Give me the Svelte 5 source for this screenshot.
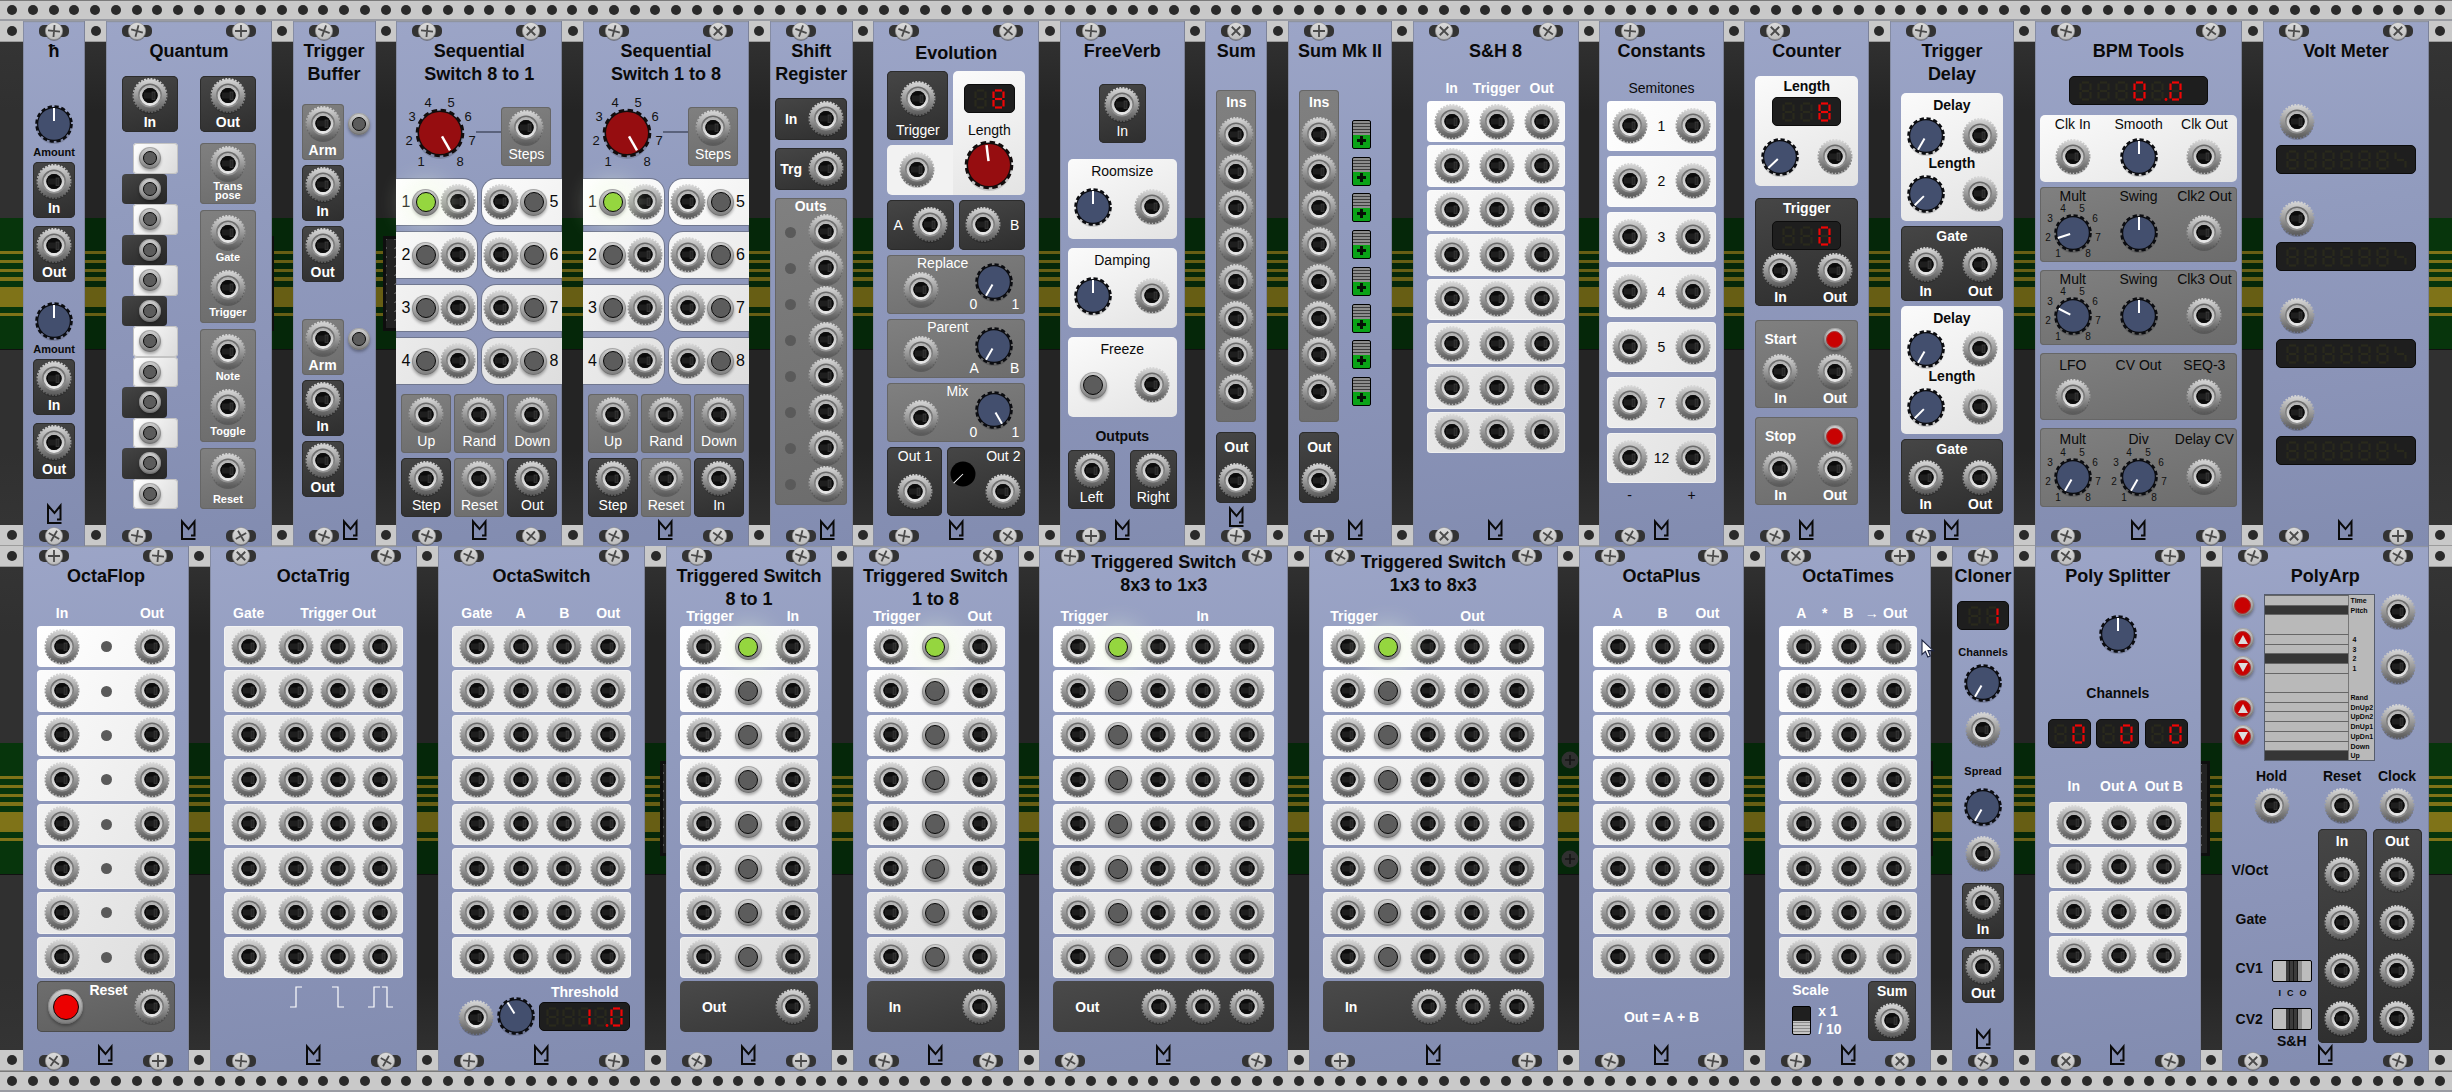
<script>
  const SEG = {
    a: 'M3 1.5H10', b: 'M11.5 2.5V9', c: 'M11.5 11V17.5', d: 'M3 18.5H10',
    e: 'M1.5 11V17.5', f: 'M1.5 2.5V9', g: 'M3 10H10'
  };
  const LIT = { 0: 'abcdef', 1: 'bc', 8: 'abcdefg' };
  const DIAL_BIG = [[-19, 28], [-31, 7], [-28, -17], [-12, -31], [11, -31], [28, -17], [32, 7], [20, 28]];
  const DIAL_SMALL = [[-15, 21], [-25, 5], [-23, -14], [-10, -24], [9, -24], [22, -14], [25, 5], [15, 21]];
  const KEYS = 'WDWDWDWWDWDW'.split('');
  const EIGHT = [0, 1, 2, 3, 4, 5, 6, 7];
  const ARP = [
    ['Time'], ['Pitch', 'on'], ['', 'blank'], ['4'], ['3'], ['2', 'on'], ['1'], ['', 'blank'],
    ['Rand'], ['DnUp2'], ['UpDn2'], ['DnUp1'], ['UpDn1'], ['Down'], ['Up', 'on']
  ];
</script>

{#snippet jack(name = 'Port')}
  <button class="jack" type="button" aria-label={name}><svg viewBox="0 0 36 36"><use href="#jack" /></svg></button>
{/snippet}

{#snippet knob(name, angle)}
  <label class="knob">
    <svg viewBox="-20 -20 40 40"><use href="#knob" /><path class="needle" d="M0 -16V-3" transform="rotate({angle})" /></svg>
    <input type="range" min="-150" max="150" value={angle} aria-label={name} />
  </label>
{/snippet}

{#snippet redKnob(name, angle)}
  <label class="knob red">
    <svg viewBox="-25 -25 50 50"><use href="#redknob" /><path class="needle" d="M0 -20V-4" transform="rotate({angle})" /></svg>
    <input type="range" min="-150" max="150" value={angle} aria-label={name} />
  </label>
{/snippet}

{#snippet bigDial(angle)}
  <label class="knob dial">
    <svg viewBox="-39 -38 100 82">
      <path class="wire" d="M36 -1H61" />
      <use href="#redknob" />
      <path class="needle" d="M0 -20V-4" transform="rotate({angle})" />
      {#each DIAL_BIG as [x, y], i}<text {x} y={y + 5}>{i + 1}</text>{/each}
    </svg>
    <input type="range" min="-150" max="150" value={angle} aria-label="Steps" />
  </label>
{/snippet}

{#snippet smallDial(name, angle)}
  <label class="knob mini">
    <svg viewBox="-30 -29 60 58">
      <use href="#knob" />
      <path class="needle" d="M0 -16V-3" transform="rotate({angle})" />
      {#each DIAL_SMALL as [x, y], i}<text {x} y={y + 3}>{i + 1}</text>{/each}
    </svg>
    <input type="range" min="-150" max="150" value={angle} aria-label={name} />
  </label>
{/snippet}

{#snippet pad(name, kind = '')}
  <button class="pad {kind}" type="button" aria-label={name}></button>
{/snippet}

{#snippet digit(ch)}
  {@const lit = LIT[ch.replace('.', '')] ?? ''}
  <svg class="digit" viewBox="0 0 13 20">
    {#each Object.entries(SEG) as [key, d]}
      {#if ch !== '?' || 'fgc'.includes(key)}<path class={lit.includes(key) ? 'on' : 'off'} {d} />{/if}
    {/each}
    {#if ch.includes('.')}<circle class="dot" cx="-3" cy="18.5" r="1.4" />{/if}
  </svg>
{/snippet}

{#snippet display(chars, kind = '')}
  <div class="display {kind}" role="img" aria-label="display">
    {#each chars as ch}{@render digit(ch)}{/each}
  </div>
{/snippet}

{#snippet cell(label, tone, bold = true)}
  <label class="plate cell {tone}" class:tall={!bold}>
    <button class="jack" type="button"><svg viewBox="0 0 36 36"><use href="#jack" /></svg></button>
    <span class:b={bold}>{label}</span>
  </label>
{/snippet}

{#snippet screw(angle)}
  <svg class="screw" viewBox="-15 -10 30 20">
    <rect x="-15" y="-6" width="30" height="12" rx="5" fill="#333" />
    <circle cy="1" r="9" fill="#555" opacity=".6" />
    <circle r="8.6" fill="url(#steel)" stroke="#8d8d8d" stroke-width=".6" />
    <path d="M-6 0H6M0 -6V6" stroke="#4a4a4a" stroke-width="1.8" transform="rotate({angle})" />
  </svg>
{/snippet}

{#snippet slot(kind = '')}
  <div class="slot {kind}">
    <i class="square"></i>
    {#if kind.includes('conn')}<i class="socket"></i>{/if}
    {#if kind === 'bolts'}
      <svg class="boltpair" viewBox="0 0 18 118">
        {#each [9, 108] as y}
          <circle cx="9" cy={y} r="8.5" fill="#303030" /><path d="M4 {y}H14M9 {y - 5}V{y + 5}" stroke="#151515" stroke-width="1.6" />
        {/each}
      </svg>
    {/if}
    <i class="square"></i>
  </div>
{/snippet}

{#snippet mod(cls, hp, title, screws, body)}
  <section class="mod hp{hp} {cls}" style:--hp={hp}>
    <div class="screws top">{@render screw(screws[0])}{#if hp > 7}{@render screw(screws[1])}{/if}</div>
    <h2>{#each title as line}<span>{line}</span>{/each}</h2>
    {@render body()}
    <svg class="logo" viewBox="0 0 15 20"><path d="M14.500 19H1V1.500L7.500 9L13.500 1.500V15.500H10" /></svg>
    <div class="screws bottom">{@render screw(screws[2])}{#if hp > 7}{@render screw(screws[3])}{/if}</div>
  </section>
{/snippet}

{#snippet hbar()}
  {#each [0, 1] as n}
    <div class="unit">
      {@render knob('Amount', 0)}
      <span class="s">Amount</span>
      <div class="pair">{@render cell('In', 'dark')}{@render cell('Out', 'dark')}</div>
    </div>
  {/each}
{/snippet}

{#snippet quantum()}
  <div class="cols first">{@render cell('In', 'dark')}{@render cell('Out', 'dark')}</div>
  <div class="cols">
    <div class="keys">
      {#each KEYS as k}<div class="key {k === 'W' ? 'white' : 'black'}">{@render pad('Note', 'small')}</div>{/each}
    </div>
    <div class="ports">
      <div class="plate grey one trans">{@render jack('Transpose')}<span class="s">Trans<br />pose</span></div>
      <div class="plate grey two">
        {@render jack('Gate')}<span class="s">Gate</span>{@render jack('Trigger')}<span class="s">Trigger</span>
      </div>
      <div class="plate grey two">
        {@render jack('Note')}<span class="s">Note</span>{@render jack('Toggle')}<span class="s">Toggle</span>
      </div>
      <div class="plate grey one">{@render jack('Reset')}<span class="s">Reset</span></div>
    </div>
  </div>
{/snippet}

{#snippet buffer()}
  {#each [0, 1] as n}
    <div class="arm">
      {@render cell('Arm', 'grey')}{@render pad('Arm', 'small')}
      {@render cell('In', 'dark')}<span></span>
      {@render cell('Out', 'dark')}
    </div>
  {/each}
{/snippet}

{#snippet sequencer(last)}
  <div class="steps">{@render bigDial(150)}{@render cell('Steps', 'grey', false)}</div>
  <div class="lanes">
    {#each [1, 2, 3, 4] as n}
      <div class="lane">
        <div class="half" style:--i={n * 2 - 2}><span>{n}</span>{@render pad('Step ' + n, n === 1 ? 'mid lit' : 'mid')}{@render jack('Step ' + n)}</div>
        <div class="half mirrored" style:--i={n * 2 - 1}><span>{n + 4}</span>{@render pad('Step ' + (n + 4), 'mid')}{@render jack('Step ' + (n + 4))}</div>
      </div>
    {/each}
  </div>
  <div class="six">
    {@render cell('Up', 'grey', false)}{@render cell('Rand', 'grey', false)}{@render cell('Down', 'grey', false)}
    {@render cell('Step', 'dark', false)}{@render cell('Reset', 'grey', false)}{@render cell(last, 'dark', false)}
  </div>
{/snippet}
{#snippet seqOut()}{@render sequencer('Out')}{/snippet}
{#snippet seqIn()}{@render sequencer('In')}{/snippet}

{#snippet shift()}
  <div class="regs">
    <div class="plate dark line"><span class="b">In</span>{@render jack('In')}</div>
    <div class="plate dark line"><span class="b">Trg</span>{@render jack('Trigger')}</div>
    <div class="plate grey outs">
      <span class="b">Outs</span>
      {#each EIGHT as n}<div class="tap"><i class="lamp"></i>{@render jack('Out ' + (n + 1))}</div>{/each}
    </div>
  </div>
{/snippet}

{#snippet evoRow(name, lo, hi, angle)}
  <div class="plate grey gene">
    <div class="left"><span>{name}</span>{@render jack(name)}</div>
    <div class="right">{@render knob(name, angle)}<div class="ends"><span>{lo}</span><span>{hi}</span></div></div>
  </div>
{/snippet}

{#snippet evolution()}
  <div class="evo">
    <div class="ell">
      <div class="plate dark trig">{@render jack('Trigger')}<span>Trigger</span></div>
      <div class="plate light len">{@render display([' ', '8'])}<span>Length</span>{@render redKnob('Length', -7)}</div>
      <div class="light foot">{@render jack('Length')}</div>
    </div>
    <div class="ab">
      <div class="plate dark"><span>A</span>{@render jack('A')}</div>
      <div class="plate dark">{@render jack('B')}<span>B</span></div>
    </div>
    {@render evoRow('Replace', '0', '1', -150)}
    {@render evoRow('Parent', 'A', 'B', -150)}
    {@render evoRow('Mix', '0', '1', 150)}
    <div class="evouts">
      <div class="plate dark out1 stack"><span>Out 1</span>{@render jack('Out 1')}</div>
      <div class="plate dark out2">
        <label class="knob trim">
          <svg viewBox="-13 -13 26 26"><circle r="12.500" fill="#000" /><path class="needle thin" d="M0 0V-13" transform="rotate(-134)" /></svg>
          <input type="range" aria-label="Out 2 trim" />
        </label>
        <div class="stack"><span>Out 2</span>{@render jack('Out 2')}</div>
      </div>
    </div>
  </div>
{/snippet}

{#snippet freeverb()}
  <div class="verb">
    <div class="solo">{@render cell('In', 'dark', false)}</div>
    <div class="plate light box"><span>Roomsize</span><div class="duo">{@render knob('Roomsize', 0)}{@render jack('Roomsize')}</div></div>
    <div class="plate light box"><span>Damping</span><div class="duo">{@render knob('Damping', 0)}{@render jack('Damping')}</div></div>
    <div class="plate light box"><span>Freeze</span><div class="duo">{@render pad('Freeze', 'mid')}{@render jack('Freeze')}</div></div>
    <span class="b cap">Outputs</span>
    <div class="cols">{@render cell('Left', 'dark', false)}{@render cell('Right', 'dark', false)}</div>
  </div>
{/snippet}

{#snippet sumStrip()}
  <div class="strip">
    <div class="plate grey ins"><span class="b">Ins</span><div class="pile">{#each EIGHT as n}{@render jack('In ' + (n + 1))}{/each}</div></div>
    <div class="plate dark total"><span class="b">Out</span>{@render jack('Out')}</div>
  </div>
{/snippet}

{#snippet sum()}<div class="sums">{@render sumStrip()}</div>{/snippet}
{#snippet sum2()}
  <div class="sums wide">
    {@render sumStrip()}
    <div class="flips">{#each EIGHT as n}<input type="checkbox" class="plus" checked aria-label="Polarity {n + 1}" />{/each}</div>
  </div>
{/snippet}

{#snippet heads(names, kind = '')}
  <div class="heads {kind}">{#each names as n}<span class="b">{n}</span>{/each}</div>
{/snippet}

{#snippet bank(cols, kind = '', count = 8)}
  <div class="bank {kind}">
    {#each EIGHT.slice(0, count) as r}
      <div class="rung" style:--i={r}>
        {#each cols as c}
          {#if c === 'j'}{@render jack('Row ' + (r + 1))}
          {:else if c === 'o'}<i class="lamp"></i>
          {:else}{@render pad('Row ' + (r + 1), r === 0 ? 'mid lit' : 'mid')}{/if}
        {/each}
      </div>
    {/each}
  </div>
{/snippet}

{#snippet sh8()}
  {@render heads(['In', 'Trigger', 'Out'])}
  {@render bank(['j', 'j', 'j'])}
{/snippet}

{#snippet constants()}
  <span class="semi">Semitones</span>
  <div class="consts">
    {#each [1, 2, 3, 4, 5, 7, 12] as n, i}
      <div class="rung" style:--i={i}>{@render jack('minus ' + n)}<span>{n}</span>{@render jack('plus ' + n)}</div>
    {/each}
  </div>
  <div class="signs"><span>-</span><span>+</span></div>
{/snippet}

{#snippet io(name)}
  <div class="duo">{@render jack(name + ' in')}{@render jack(name + ' out')}</div>
  <div class="duo tags"><span class="b">In</span><span class="b">Out</span></div>
{/snippet}

{#snippet counter()}
  <div class="count">
    <div class="plate light c1"><span class="b">Length</span>{@render display([' ', ' ', '8'])}<div class="duo">{@render knob('Length', -133)}{@render jack('Length')}</div></div>
    <div class="plate dark c2"><span class="b">Trigger</span>{@render display([' ', ' ', '0'])}{@render io('Trigger')}</div>
    <div class="plate grey c3"><div class="duo head"><span class="b">Start</span>{@render pad('Start', 'small redled')}</div>{@render io('Start')}</div>
    <div class="plate grey c3 c4"><div class="duo head"><span class="b">Stop</span>{@render pad('Stop', 'small redled')}</div>{@render io('Stop')}</div>
  </div>
{/snippet}

{#snippet delay()}
  <div class="delays">
    {#each [0, 1] as n}
      <div class="plate light d1">
        <span class="b">Delay</span><div class="duo">{@render knob('Delay', -150)}{@render jack('Delay')}</div>
        <span class="b">Length</span><div class="duo">{@render knob('Length', -135)}{@render jack('Length')}</div>
      </div>
      <div class="plate dark d2"><span class="b">Gate</span>{@render io('Gate')}</div>
    {/each}
  </div>
{/snippet}

{#snippet bpm()}
  <div class="tools">
    {@render display([' ', ' ', ' ', '0', ' ', '.0'])}
    <div class="plate light tri t1">
      <span>Clk In</span><span>Smooth</span><span>Clk Out</span>
      {@render jack('Clock in')}{@render knob('Smooth', 0)}{@render jack('Clock out')}
    </div>
    <div class="plate grey tri t2">
      <span>Mult</span><span>Swing</span><span>Clk2 Out</span>
      {@render smallDial('Mult', -108)}{@render knob('Swing', 0)}{@render jack('Clock 2 out')}
    </div>
    <div class="plate grey tri t3">
      <span>Mult</span><span>Swing</span><span>Clk3 Out</span>
      {@render smallDial('Mult', -63)}{@render knob('Swing', 0)}{@render jack('Clock 3 out')}
    </div>
    <div class="plate grey tri t4">
      <span>LFO</span><span>CV Out</span><span>SEQ-3</span>
      {@render jack('LFO')}<i></i>{@render jack('SEQ-3')}
    </div>
    <div class="plate grey tri t5">
      <span>Mult</span><span>Div</span><span>Delay CV</span>
      {@render smallDial('Mult', -150)}{@render smallDial('Div', -150)}{@render jack('Delay CV')}
    </div>
  </div>
{/snippet}

{#snippet volts()}
  <div class="meters">
    {#each [1, 2, 3, 4] as n}<div class="meter">{@render jack('Volt ' + n)}{@render display([' ', ' ', ' ', ' ', ' ', ' ', '?'])}</div>{/each}
  </div>
{/snippet}

{#snippet octaflop()}
  {@render heads(['In', '', 'Out'])}
  {@render bank(['j', 'o', 'j'])}
  <div class="base reset">{@render pad('Reset', 'large')}<span class="b">Reset</span>{@render jack('Reset')}</div>
{/snippet}

{#snippet octatrig()}
  {@render heads(['Gate', '', 'Trigger Out', ''], 'lead')}
  {@render bank(['j', 'j', 'j', 'j'], 'lead flat')}
  <div class="edges">
    <svg viewBox="0 0 36 22"><path d="M12 21H18V1H24" /></svg>
    <svg viewBox="0 0 36 22"><path d="M12 1H18V21H24" /></svg>
    <svg viewBox="0 0 36 22"><path d="M6 21H12V1H18M20 1H25V21H31" /></svg>
  </div>
{/snippet}

{#snippet octaswitch()}
  {@render heads(['Gate', 'A', 'B', 'Out'])}
  {@render bank(['j', 'j', 'j', 'j'], 'flat')}
  <div class="thresh">
    {@render jack('Threshold')}{@render knob('Threshold', -32)}
    <div class="stack"><span class="b">Threshold</span>{@render display([' ', ' ', '1', ' ', '.0'], 'tight')}</div>
  </div>
{/snippet}

{#snippet ts(dir)}
  {@render heads(['Trigger', '', dir === 'Out' ? 'In' : 'Out'], 'low')}
  {@render bank(['j', 'b', 'j'], 'trio')}
  <div class="base"><span class="b">{dir}</span>{@render jack(dir)}</div>
{/snippet}
{#snippet ts81()}{@render ts('Out')}{/snippet}
{#snippet ts18()}{@render ts('In')}{/snippet}
{#snippet ts3(dir)}
  {@render heads(['Trigger', '', '', dir === 'Out' ? 'In' : 'Out', ''], 'low high')}
  {@render bank(['j', 'b', 'j', 'j', 'j'], 'five')}
  <div class="base five"><span class="b">{dir}</span>{@render jack(dir)}{@render jack(dir)}{@render jack(dir)}</div>
{/snippet}
{#snippet ts83()}{@render ts3('Out')}{/snippet}
{#snippet ts38()}{@render ts3('In')}{/snippet}

{#snippet octaplus()}
  {@render heads(['A', 'B', 'Out'])}
  {@render bank(['j', 'j', 'j'])}
  <span class="b formula">Out = A + B</span>
{/snippet}

{#snippet octatimes()}
  {@render heads(['A', '*', 'B', '→', 'Out'], 'ops')}
  {@render bank(['j', 'j', 'j'])}
  <div class="scale">
    <div class="stack">
      <span class="b">Scale</span>
      <div class="pick"><input type="checkbox" class="rocker" aria-label="Scale" /><span class="b">x 1<br />/ 10</span></div>
    </div>
    <div class="plate dark sumout"><span class="b">Sum</span>{@render jack('Sum')}</div>
  </div>
{/snippet}

{#snippet cloner()}
  <div class="clone">
    {@render display([' ', '1'], 'two')}
    <span class="s c">Channels</span>{@render knob('Channels', -150)}{@render jack('Channels')}
    <span class="s sp">Spread</span>{@render knob('Spread', -150)}{@render jack('Spread')}
    <div class="pair">{@render cell('In', 'dark')}{@render cell('Out', 'dark')}</div>
  </div>
{/snippet}

{#snippet splitter()}
  <div class="split">
    {@render knob('Channels', 0)}
    <span class="b">Channels</span>
    <div class="counts">{@render display([' ', '0'], 'two')}{@render display([' ', '0'], 'two')}{@render display([' ', '0'], 'two')}</div>
  </div>
  {@render heads(['In', 'Out A', 'Out B'], 'under')}
  {@render bank(['j', 'j', 'j'], 'flat four', 4)}
{/snippet}

{#snippet polyarp()}
  <div class="arp">
    <div class="arptop">
      <div class="btns">
        {@render pad('Select', 'small redled')}
        {@render pad('Up', 'small redled up g12')}{@render pad('Down', 'small redled down g6')}
        {@render pad('Up', 'small redled up g19')}{@render pad('Down', 'small redled down g6')}
      </div>
      <ul class="screen">
        {#each ARP as [name, kind]}<li class={kind}><i></i><span class:num={name.length === 1}>{name}</span></li>{/each}
      </ul>
      <div class="jcol">{@render jack('Time')}{@render jack('Distance')}{@render jack('Pattern')}</div>
    </div>
    <div class="arpgrid mid">
      <div class="stack"><span class="b">Hold</span>{@render jack('Hold')}</div>
      <div class="stack"><span class="b">Reset</span>{@render jack('Reset')}</div>
      <div class="stack"><span class="b">Clock</span>{@render jack('Clock')}</div>
    </div>
    <div class="arpgrid">
      <div class="legend">
        <span class="b">V/Oct</span>
        <span class="b">Gate</span>
        <label class="cv start"><span class="b">CV1</span><input type="range" min="0" max="2" value="1" /></label>
        <div class="ico"><span>I</span><span>C</span><span>O</span></div>
        <label class="cv"><span class="b">CV2</span><input type="range" min="0" max="2" value="1" /></label>
        <span class="b sh">S&amp;H</span>
      </div>
      {#each ['In', 'Out'] as t}
        <div class="plate dark tower"><span class="b">{t}</span>{@render jack('V/Oct ' + t)}{@render jack('Gate ' + t)}{@render jack('CV1 ' + t)}{@render jack('CV2 ' + t)}</div>
      {/each}
    </div>
  </div>
{/snippet}

{#snippet rail()}
  <div class="rail">{#each Array(118) as _}<i></i>{/each}</div>
{/snippet}

<svg class="defs" width="0" height="0" aria-hidden="true">
  <defs>
    <linearGradient id="knurl" x1="0" y1="0" x2="0" y2="1"><stop offset="0" stop-color="#d6d6d6" /><stop offset=".5" stop-color="#9a9a9a" /><stop offset="1" stop-color="#5a5a5a" /></linearGradient>
    <linearGradient id="dish" x1="0" y1="0" x2="0" y2="1"><stop offset="0" stop-color="#686868" /><stop offset="1" stop-color="#969696" /></linearGradient>
    <linearGradient id="lip" x1="0" y1="0" x2="0" y2="1"><stop offset="0" stop-color="#b4b4b4" /><stop offset="1" stop-color="#e6e6e6" /></linearGradient>
    <linearGradient id="steel" x1="0" y1="0" x2="0" y2="1"><stop offset="0" stop-color="#dcdcdc" /><stop offset="1" stop-color="#bdbdbd" /></linearGradient>
    <symbol id="jack" viewBox="0 0 36 36">
      <circle cx="18" cy="19.500" r="16.500" fill="#000" opacity=".2" />
      <circle cx="18" cy="17.500" r="16.300" fill="url(#knurl)" />
      <circle cx="18" cy="17.500" r="16.600" fill="none" stroke="url(#knurl)" stroke-width="1.800" stroke-dasharray="1.900 1.360" />
      <circle cx="18" cy="17.500" r="12" fill="url(#dish)" />
      <circle cx="18" cy="17.500" r="9" fill="#0e0e0e" stroke="url(#lip)" stroke-width="2.800" />
      <circle cx="18" cy="17.500" r="7.600" fill="#0b0b0b" />
      <rect x="12" y="14.500" width="7.500" height="6" fill="#1e1e1e" />
      <rect x="20" y="14" width="3" height="7.500" fill="#242424" stroke="#3c3c3c" stroke-width=".8" />
    </symbol>
    <g id="knob">
      <circle cy="2" r="18" fill="#000" opacity=".15" />
      <circle r="17" fill="#0b0c10" />
      <circle r="17.400" fill="none" stroke="#0b0c10" stroke-width="2.800" stroke-dasharray="4.200 2.630" />
      <circle r="15.800" fill="#434f6e" />
    </g>
    <g id="redknob">
      <circle cy="3" r="23" fill="#000" opacity=".15" />
      <circle r="22.400" fill="#120c0c" />
      <circle r="22.800" fill="none" stroke="#120c0c" stroke-width="3" stroke-dasharray="5.400 3.550" />
      <circle r="21" fill="#960d10" />
    </g>
  </defs>
</svg>

<main>
  {@render rail()}
  <div class="row">
    {@render slot('edge')}
    {@render mod('hbar', 3, ['ħ'], [5, 0, 30], hbar)}{@render slot()}
    {@render mod('quantum', 8, ['Quantum'], [15, 0, 10, 60], quantum)}{@render slot('conn left thin')}
    {@render mod('buffer', 4, ['Trigger', 'Buffer'], [20, 0, 20], buffer)}{@render slot('conn wide')}
    {@render mod('seq', 8, ['Sequential', 'Switch 8 to 1'], [5, 45, 20, 40], seqOut)}{@render slot()}
    {@render mod('seq', 8, ['Sequential', 'Switch 1 to 8'], [15, 45, 25, 35], seqIn)}{@render slot()}
    {@render mod('shift', 4, ['Shift', 'Register'], [20, 0, 15], shift)}{@render slot()}
    {@render mod('evolution', 8, ['Evolution'], [20, 40, 10, 35], evolution)}{@render slot()}
    {@render mod('freeverb', 6, ['FreeVerb'], [5, 0, 0], freeverb)}{@render slot()}
    {@render mod('sum', 3, ['Sum'], [45, 0, 8], sum)}{@render slot()}
    {@render mod('sum2', 5, ['Sum Mk II'], [0, 0, 0], sum2)}{@render slot()}
    {@render mod('sh8', 8, ['S&H 8'], [45, 35, 45, 35], sh8)}{@render slot()}
    {@render mod('constants', 6, ['Constants'], [5, 0, 30], constants)}{@render slot()}
    {@render mod('counter', 6, ['Counter'], [45, 0, 25], counter)}{@render slot()}
    {@render mod('delay', 6, ['Trigger', 'Delay'], [10, 0, 20], delay)}{@render slot()}
    {@render mod('bpm', 10, ['BPM Tools'], [15, 35, 20, 15], bpm)}{@render slot()}
    {@render mod('volts', 8, ['Volt Meter'], [5, 45, 45, 0], volts)}
    {@render slot('edge')}
  </div>
  <div class="row">
    {@render slot('edge')}
    {@render mod('octa', 8, ['OctaFlop'], [0, 5, 35, 0], octaflop)}{@render slot()}
    {@render mod('octa', 10, ['OctaTrig'], [45, 20, 5, 30], octatrig)}{@render slot()}
    {@render mod('octa', 10, ['OctaSwitch'], [25, 20, 5, 10], octaswitch)}{@render slot('conn narrow')}
    {@render mod('octa', 8, ['Triggered Switch', '8 to 1'], [10, 20, 30, 0], ts81)}{@render slot()}
    {@render mod('octa', 8, ['Triggered Switch', '1 to 8'], [25, 35, 15, 20], ts18)}{@render slot()}
    {@render mod('octa raised', 12, ['Triggered Switch', '8x3 to 1x3'], [5, 20, 30, 20], ts83)}{@render slot()}
    {@render mod('octa raised', 12, ['Triggered Switch', '1x3 to 8x3'], [30, 15, 0, 5], ts38)}{@render slot('bolts')}
    {@render mod('octa', 8, ['OctaPlus'], [5, 5, 20, 10], octaplus)}{@render slot()}
    {@render mod('octa', 8, ['OctaTimes'], [40, 0, 10, 45], octatimes)}{@render slot('conn left thin')}
    {@render mod('cloner', 3, ['Cloner'], [15, 0, 30], cloner)}{@render slot()}
    {@render mod('octa', 8, ['Poly Splitter'], [35, 5, 45, 20], splitter)}{@render slot('conn left')}
    {@render mod('polyarp', 10, ['PolyArp'], [20, 30, 45, 20], polyarp)}
    {@render slot('edge')}
  </div>
  {@render rail()}
  <svg class="cursor" viewBox="0 0 13 19"><path d="M1 1V15.500L4.400 12.400L6.800 18L9.300 17L7 11.600H12.200Z" fill="#fff" stroke="#1c2340" stroke-width="1.100" /></svg>
</main>

<style>
  :global(body) { margin: 0; background: #242424; }
  main {
    position: relative; overflow: hidden;
    font: 14px/16px "Liberation Sans", Arial, sans-serif; color: #0a0a0a;
  }
  main *, main *::before, main *::after { box-sizing: border-box; }
  svg { display: block; overflow: visible; }
  span { white-space: nowrap; }
  .b { font-weight: 700; }
  .s { font-weight: 700; font-size: 11px; }
  .defs { height: 0; }

  .rail {
    display: flex; justify-content: space-between; align-items: center; height: 21px; padding: 0 7px;
    background: #c9c9c9; border-top: 1px solid #7b7b7b; border-bottom: 2px solid #9a9ca3;
  }
  .rail i { width: 10px; height: 10px; border-radius: 50%; background: #2a2a2a; }

  .row { display: flex; min-height: 525px; }
  .slot {
    --dark: #242424; --pcb: #052709; --gold: #675e14; --lit: #303030;
    position: relative; flex: 1 1 0; min-width: 0; display: flex; flex-direction: column; justify-content: space-between;
    background: linear-gradient(var(--lit) 21px, var(--dark) 90px, var(--dark) 197px,
      var(--pcb) 197px, var(--pcb) 230px, var(--gold) 230px, var(--gold) 233px, var(--pcb) 233px, var(--pcb) 239px,
      var(--gold) 239px, var(--gold) 242px, var(--pcb) 242px, var(--pcb) 248px, var(--gold) 248px, var(--gold) 251px,
      var(--pcb) 251px, var(--pcb) 256px, var(--gold) 256px, var(--gold) 260px, var(--pcb) 260px, var(--pcb) 266px,
      var(--gold) 266px, var(--gold) 286px, var(--pcb) 286px, var(--pcb) 292px, var(--gold) 292px, var(--gold) 295px,
      var(--pcb) 295px, var(--pcb) 328px, #111 328px, #111 329px, var(--dark) 329px, var(--dark) 430px, var(--lit) 504px);
  }
  .slot.edge { flex: 0 0 23px; --dark: #303030; --pcb: #07350c; --gold: #7f7318; --lit: #343434; }
  .square { display: flex; align-items: center; justify-content: center; height: 21px; background: #c9c9c9; border-bottom: 1px solid #9c9c9c; }
  .square::after { content: ""; width: 10px; height: 10px; border-radius: 50%; background: #2a2a2a; }
  .socket {
    position: absolute; right: 0; top: 215px; width: 13px; height: 95px;
    background: radial-gradient(circle, #555 1px, transparent 1px) 5px 5px / 9px 9px #222;
    border: 3px solid #0e0e0e; border-right: 0;
  }
  .narrow .socket { width: 6px; }
  .left .socket { left: 0; right: auto; width: 9px; border-right: 3px solid #0e0e0e; border-left: 0; }
  .thin .socket { width: 2px; border: 0; background: #0e0e0e; }
  .boltpair { position: absolute; right: 0; top: 205px; width: 18px; height: 118px; }

  .mod {
    position: relative; flex: var(--hp) 1 0; min-width: 0; display: flex; flex-direction: column; align-items: stretch;
    padding: 19px 0 6px;
    background: linear-gradient(172deg, #9ca5c7 0%, #919bbe 35%, #8b94b8 65%, #828cb0 100%);
    box-shadow: inset 1px 0 #858ca3, inset -1px 0 #7c8299, inset 0 1px #8f949f, inset 0 2px #98a1c0;
  }
  .raised { padding-top: 5px; }
  .evolution { padding-top: 21px; }
  h2 { margin: 0; display: flex; flex-direction: column; align-items: center; font-size: 18px; line-height: 23px; font-weight: 700; z-index: 1; }
  .screws { position: absolute; left: 16px; right: 16px; display: flex; justify-content: space-between; }
  .screws.top { top: 0; }
  .screws.bottom { bottom: 0; }
  .screw { width: 30px; height: 20px; flex: none; }
  .logo { width: 15px; height: 20px; margin: auto auto 0; flex: none; z-index: 1; fill: none; stroke: #0a0a0a; stroke-width: 2; }
  .hp3 { padding-bottom: 22px; }
  .hp4 .logo { margin-right: 18px; }
  .hp5 .logo { margin-right: 29px; }

  button, input { margin: 0; padding: 0; border: 0; background: none; font: inherit; }
  .jack { display: block; width: 36px; height: 36px; flex: none; }
  .jack svg { width: 36px; height: 36px; }
  .knob { position: relative; display: block; width: 40px; height: 40px; flex: none; }
  .knob svg { width: 100%; height: 100%; }
  .knob input { position: absolute; inset: 0; width: 100%; height: 100%; opacity: 0; }
  .knob.red { width: 50px; height: 50px; }
  .knob.trim { width: 26px; height: 26px; }
  .knob.dial { width: 100px; height: 82px; }
  .knob.mini { width: 60px; height: 58px; }
  .knob text { text-anchor: middle; fill: #111; }
  .dial text { font-size: 13px; }
  .mini text { font-size: 10px; }
  .needle { fill: none; stroke: #fff; stroke-width: 2; }
  .needle.thin { stroke-width: 1; }
  .red .needle, .dial .needle { stroke-width: 2.500; }
  .wire { stroke: #3b4157; stroke-width: 1.300; }

  .pad {
    position: relative; flex: none; border-radius: 50%; width: 22px; height: 22px;
    display: flex; align-items: center; justify-content: center;
    background: linear-gradient(#d2d2d2, #7d7d7d); box-shadow: 0 0 0 1px rgba(90, 90, 90, .35) inset, 0 2px 3px rgba(0, 0, 0, .3);
  }
  .pad::after { content: ""; width: 14px; height: 14px; border-radius: 50%; background: #5c5c5c; border: 1px solid #080808; }
  .pad.mid { width: 27px; height: 27px; }
  .pad.mid::after { width: 20px; height: 20px; }
  .pad.large { width: 35px; height: 35px; }
  .pad.large::after { width: 26px; height: 26px; background: #ec0000; }
  .pad.redled::after { width: 17px; height: 17px; background: #c80202; border-color: #a33; }
  .pad.lit::after { background: #95d63f; }
  .pad.lit { z-index: 1; box-shadow: 0 0 26px 6px rgba(242, 255, 225, .6), 0 2px 3px rgba(0, 0, 0, .25), 0 0 0 1px rgba(90, 90, 90, .35) inset; }
  .up::before, .down::before { content: ""; position: absolute; z-index: 1; border: 5px solid transparent; border-width: 0 5px 9px; border-bottom-color: #dcdcdc; }
  .down::before { border-width: 9px 5px 0; border-top-color: #dcdcdc; }
  .lamp { width: 11px; height: 11px; border-radius: 50%; background: #5a5a5a; flex: none; }

  .display {
    display: flex; align-items: center; gap: 5px; height: 29px; padding: 0 9px; flex: none;
    background: #1e1e1e; border: 1px solid #0c0c0c; border-radius: 5px;
  }
  .digit { width: 13px; height: 20px; flex: none; }
  .digit path { stroke-width: 2.200; fill: none; }
  .digit .off { stroke: #29291c; }
  .digit .on { stroke: #f00505; }
  .dot { fill: #e00; }
  .tight { gap: 3px; padding: 0 6px; }
  .two { gap: 5px; padding: 0 5px; justify-content: center; }

  .plate { border-radius: 5px; }
  .dark { background: linear-gradient(165deg, #464646, #2e2e2e); color: #fff; box-shadow: inset 0 0 0 1px #2c2c2c; }
  .grey { background: linear-gradient(165deg, #808080, #6c6c6c); color: #fff; box-shadow: inset 0 0 0 1px #666; border-radius: 4px; }
  .light { background: linear-gradient(155deg, #fbfbfb, #e3e3e3); }
  .cell { display: flex; flex-direction: column; align-items: center; width: 42px; padding: 2px 0; }
  .cell.tall { width: 50px; padding: 3px 0 4px; }
  .cols { display: flex; justify-content: space-between; }
  .stack { display: flex; flex-direction: column; align-items: center; }
  .duo { display: grid; grid-template-columns: 50px 46px; justify-content: space-between; align-self: stretch; align-items: center; justify-items: center; }

  .unit { display: flex; flex-direction: column; align-items: center; margin-top: 41px; }
  .unit + .unit { margin-top: 19px; }
  .pair { display: flex; flex-direction: column; align-items: center; gap: 8px; margin-top: 2px; }

  .quantum .cols { padding: 0 16px; margin-top: 11px; }
  .quantum .cols.first { margin-top: 13px; }
  .quantum .cell { width: 56px; }
  .keys { width: 56px; height: 366px; display: flex; flex-direction: column; }
  .key { flex: 1; width: 45px; display: flex; align-items: center; border-radius: 4px; }
  .key.white { align-self: flex-end; padding-left: 6px; background: linear-gradient(120deg, #fff, #dadada); box-shadow: inset 0 0 0 1px #c3c3c3; }
  .key.black { padding-left: 17px; background: linear-gradient(150deg, #454545, #262626); }
  .ports { width: 56px; display: flex; flex-direction: column; gap: 6px; }
  .one, .two.plate { display: flex; flex-direction: column; align-items: center; padding: 5px 0 4px; gap: 0; }
  .two.plate { justify-content: flex-start; }
  .one { height: 61px; justify-content: space-between; }
  .trans { padding: 3px 0 4px; justify-content: flex-start; text-align: center; }
  .ports .s { line-height: 12px; }
  .ports .trans .s { line-height: 9px; }
  .two.plate { height: 113px; }
  .two.plate .s + :global(.jack) { margin-top: 7px; }

  .arm { display: grid; grid-template-columns: 42px 22px; gap: 5px 4px; margin: 18px 0 0 9px; }
  .arm + .arm { margin-top: 37px; }
  .arm .pad { margin-top: 9px; }

  .steps { display: flex; align-items: center; margin: 9px 0 1px 5px; }
  .lanes { display: flex; flex-direction: column; gap: 5px; }
  .lane { display: flex; gap: 3px; }
  .half {
    flex: 1; display: flex; align-items: center; gap: 1px; height: 48px; padding: 0 1px 0 4px;
    background: linear-gradient(120deg, hsl(0 0% calc(100% - var(--i) * 1.3%)), hsl(0 0% calc(96% - var(--i) * 1.3%)));
    border: 1px solid #70778f; border-width: 1px 1px 1px 0; border-radius: 0 15px 15px 0;
  }
  .half > span { width: 11px; font-size: 16px; text-align: center; }
  .half.mirrored { flex-direction: row-reverse; padding: 0 4px 0 1px; border-width: 1px 0 1px 1px; border-radius: 15px 0 0 15px; }
  .six { display: grid; grid-template-columns: repeat(3, 50px); justify-content: center; gap: 5px 3px; margin-top: 9px; }

  .regs { display: flex; flex-direction: column; gap: 8px; padding: 12px 6px 0 5px; }
  .line { display: flex; align-items: center; height: 42px; padding-right: 3px; }
  .line span { flex: 1; text-align: center; }
  .outs { display: flex; flex-direction: column; align-items: stretch; padding-bottom: 3px; }
  .outs > span { text-align: center; }
  .tap { display: flex; align-items: center; justify-content: space-between; padding: 0 3px 0 10px; }

  .evo { display: flex; flex-direction: column; gap: 5px; margin-top: 6px; padding: 0 14px; }
  .ell { display: grid; grid-template-columns: 61px 5px 1fr; grid-template-rows: 69px 5px 50px; }
  .trig { display: flex; flex-direction: column; align-items: center; padding-top: 10px; gap: 5px; }
  .len { grid-column: 3; grid-row: 1 / 4; display: flex; flex-direction: column; align-items: center; padding-top: 13px; gap: 9px; border-bottom-left-radius: 0; }
  .len .knob { margin-top: -7px; }
  .foot { grid-column: 1 / 3; grid-row: 3; display: flex; align-items: center; padding-left: 12px; border-radius: 5px 0 0 5px; background: #f2f2f2; }
  .ab { display: grid; grid-template-columns: 1fr 1fr; gap: 5px; }
  .ab .plate { display: flex; align-items: center; justify-content: space-between; height: 50px; padding: 0 6px; }
  .gene { display: flex; height: 59px; }
  .gene .left { width: 82px; display: flex; flex-direction: column; align-items: flex-end; padding-right: 1px; gap: 1px; }
  .gene .left .jack { align-self: flex-start; margin-left: 16px; }
  .gene .right { width: 50px; display: flex; flex-direction: column; align-items: center; padding-top: 7px; }
  .ends { display: flex; justify-content: space-between; align-self: stretch; margin-top: -6px; }
  .evouts { display: grid; grid-template-columns: 55px 78px; justify-content: space-between; }
  .out1, .out2 { height: 69px; padding-top: 1px; }
  .out1.stack, .out2 .stack { gap: 10px; }
  .out2 { display: flex; padding: 1px 4px 0 3px; justify-content: space-between; }
  .out2 .trim { margin-top: 13px; }

  .verb { display: flex; flex-direction: column; padding: 0 8px; margin-top: 21px; }
  .verb .cell { width: 47px; }
  .solo { display: flex; justify-content: center; margin-bottom: 7px; }
  .box { display: flex; flex-direction: column; align-items: center; height: 80px; margin-top: 9px; padding-top: 4px; gap: 8px; }
  .box .duo { height: 40px; grid-template-columns: 50px 50px; }
  .cap { text-align: center; margin: 11px 0 6px; }

  .sums { display: flex; margin-top: 27px; justify-content: center; }
  .sums.wide { justify-content: flex-start; gap: 13px; padding-left: 11px; }
  .strip { display: flex; flex-direction: column; gap: 10px; }
  .ins { width: 40px; padding: 4px 2px 12px; text-align: center; }
  .pile { display: flex; flex-direction: column; justify-content: space-between; height: 293px; margin-top: 7px; }
  .total { display: flex; flex-direction: column; align-items: center; gap: 8px; width: 40px; height: 71px; padding-top: 7px; }
  .sum { padding-bottom: 19px; }
  .flips { display: flex; flex-direction: column; justify-content: space-between; height: 286px; margin-top: 30px; }
  .plus, .rocker { appearance: none; display: block; flex: none; width: 19px; height: 29px; border: 1px solid #000; border-radius: 2px; }
  .plus {
    background:
      linear-gradient(#061006, #061006) 4px 18px / 9px 3px no-repeat,
      linear-gradient(#061006, #061006) 7px 15px / 3px 9px no-repeat,
      linear-gradient(#0aa317, #0aa317) 0 14px / 100% 14px no-repeat,
      repeating-linear-gradient(#8c8c8c 0 2px, #3d3d3d 2px 3px);
  }
  .rocker { background: linear-gradient(#1f1f1f, #1f1f1f) 0 0 / 100% 14px no-repeat, repeating-linear-gradient(#8a8a8a 0 1px, #c4c4c4 1px 3px); }

  .heads { display: flex; justify-content: space-between; margin: 17px 14px 5px; padding: 0 5px 0 7px; color: #fff; }
  .heads span { width: 36px; display: flex; justify-content: center; }
  .heads.low { margin: -3px 14px 2px; padding: 0 7px 0 6px; }
  .heads.low span:nth-child(2) { width: 27px; }
  .heads.low span:first-child { padding-left: 12px; }
  .heads.high { margin-top: 11px; padding: 0 9px 0 7px; }
  .heads.lead { gap: 6px; }
  .heads.lead span:first-child, .lead .rung > :global(:first-child) { margin-right: auto; }
  .heads.ops { padding: 0 13px; }
  .heads.ops span { width: 18px; }
  .heads.under { margin: 30px 14px 8px; }
  .bank { display: flex; flex-direction: column; gap: 3px; height: 352px; margin: 0 14px; flex: none; }
  .bank.four { height: 175px; }
  .rung {
    flex: 1; display: flex; align-items: center; justify-content: space-between; padding: 0 5px 0 7px; border-radius: 4px;
    background: linear-gradient(120deg, hsl(0 0% calc(100% - var(--i) * 1.3%)), hsl(0 0% calc(96% - var(--i) * 1.3%)));
    box-shadow: inset 0 0 0 1px rgba(255, 255, 255, .4);
  }
  .flat .rung { background: #ebebeb; }
  .lead .rung { gap: 6px; }
  .trio .rung { padding: 0 7px 0 6px; }
  .five .rung { padding-right: 9px; }

  .semi { margin: 17px 0 5px; text-align: center; }
  .consts { display: flex; flex-direction: column; gap: 5px; height: 382px; margin: 0 8px; }
  .consts .rung { padding: 0 5px; }
  .consts .rung span { width: 20px; text-align: center; }
  .signs { display: flex; justify-content: space-between; padding: 4px 28px 0; }

  .count { display: flex; flex-direction: column; margin: 13px 11px 0; }
  .count .plate { display: flex; flex-direction: column; align-items: center; padding-top: 2px; }
  .c1 { height: 110px; gap: 3px; }
  .c1 .duo { margin-top: 8px; }
  .count .c2 { height: 108px; margin-top: 12px; }
  .c2 .display { margin: 5px 0 3px; }
  .count .c3 { height: 88px; margin-top: 14px; padding-top: 8px; }
  .count .c4 { margin-top: 9px; }
  .c3 .head { height: 22px; margin-bottom: 4px; }
  .tags { height: 16px; }

  .delays { display: flex; flex-direction: column; gap: 5px; margin: 7px 11px 0; }
  .delays .plate { display: flex; flex-direction: column; align-items: center; }
  .d1 { height: 128px; padding-top: 4px; gap: 3px; }
  .d1 .duo + span { margin-top: -4px; }
  .d2 { height: 75px; padding-top: 2px; }
  .d2 > span { margin-bottom: 3px; }

  .tools { display: flex; flex-direction: column; align-items: stretch; margin: 13px 5px 0; }
  .tools .display { align-self: center; width: 139px; }
  .tri { display: grid; grid-template-columns: repeat(3, 1fr); grid-template-rows: 16px 1fr; justify-items: center; align-items: center; padding: 1px 0 0; color: #0a0a0a; }
  .t1 { height: 67px; margin-top: 10px; }
  .t2 { height: 75px; margin-top: 5px; }
  .t3 { height: 75px; margin-top: 8px; }
  .t4 { height: 67px; margin-top: 8px; padding-top: 4px; }
  .t5 { height: 79px; margin-top: 8px; padding-top: 3px; }

  .meters { display: flex; flex-direction: column; gap: 27px; margin: 41px 13px 0; }
  .meter { display: flex; flex-direction: column; gap: 5px; }
  .meter .jack { margin-left: 3px; }

  .base {
    display: flex; align-items: center; height: 51px; margin: 3px 14px 0; padding: 0 7px 0 22px; border-radius: 5px; flex: none;
    background: linear-gradient(165deg, #4a4a4a, #363636); color: #fff;
  }
  .base span { margin-right: auto; }
  .base.five { gap: 8px; padding-right: 9px; }
  .base.reset { background: linear-gradient(165deg, #6e6e6e, #5c5c5c); box-shadow: inset 0 0 0 1px #4c4c4c; justify-content: space-between; padding: 0 5px 0 11px; }
  .reset span { margin: 0; align-self: flex-start; padding-top: 1px; }
  .edges { display: flex; justify-content: flex-end; gap: 6px; margin: 8px 19px 0; }
  .edges svg { width: 36px; height: 22px; fill: none; stroke: #fff; stroke-width: 1.200; }
  .thresh { display: flex; align-items: flex-end; gap: 2px; margin: 6px 15px 0 20px; color: #fff; }
  .thresh .stack { margin-left: auto; padding-bottom: 5px; gap: 2px; }
  .formula { color: #fff; text-align: center; margin-top: 31px; }
  .scale { display: flex; justify-content: space-between; margin: 3px 15px 0 27px; color: #fff; }
  .scale > .stack { align-items: flex-start; gap: 3px; }
  .pick { display: flex; align-items: center; gap: 7px; }
  .scale .stack .b { line-height: 18px; }
  .sumout { display: flex; flex-direction: column; align-items: center; gap: 4px; width: 48px; height: 60px; padding-top: 2px; }

  .clone { display: flex; flex-direction: column; align-items: center; margin-top: 13px; }
  .clone .two { width: 52px; }
  .clone .c { margin: 14px 0 3px; }
  .clone .sp { margin: 15px 0 8px; }
  .clone .jack { margin-top: 9px; }
  .clone .pair { margin-top: 11px; }
  .clone .pair .jack { margin-top: 0; }

  .split { display: flex; flex-direction: column; align-items: center; margin-top: 26px; }
  .split > .b { margin: 31px 0 18px; }
  .counts { display: flex; justify-content: space-between; align-self: stretch; margin: 0 13px; }
  .counts .two { width: 43px; }

  .arp { margin-top: 6px; padding-left: 10px; }
  .arptop { display: flex; height: 167px; }
  .btns { display: flex; flex-direction: column; margin-right: 10px; }
  .g12 { margin-top: 12px; }
  .g6 { margin-top: 6px; }
  .g19 { margin-top: 19px; }
  .screen { list-style: none; margin: 0; padding: 0; width: 111px; display: flex; flex-direction: column; background: #b9b9b9; border: 1px solid #555c6c; }
  .screen li { flex: 1; display: flex; min-height: 0; font-size: 7px; font-weight: 700; line-height: 11px; }
  .screen li.blank { flex: 2; }
  .screen i { width: 84px; border-top: 1px solid #666; border-right: 1px solid #777; }
  .screen .on i { background: #363636; }
  .screen li span { padding-left: 2px; }
  .screen li span.num { padding-left: 4px; }
  .jcol { display: flex; flex-direction: column; gap: 19px; margin-left: 5px; }
  .arpgrid { display: grid; grid-template-columns: 80px 49px 49px; gap: 6px; }
  .arpgrid.mid { margin: 7px 0 5px; }
  .arpgrid.mid .stack { gap: 4px; }
  .tower { display: flex; flex-direction: column; align-items: center; gap: 12px; height: 214px; padding-top: 4px; }
  .tower .b + :global(.jack) { margin-top: -4px; }
  .legend { display: flex; flex-direction: column; padding-top: 33px; height: 214px; }
  .legend > .b + .b { margin: 33px 0; padding-left: 4px; }
  .cv { display: flex; justify-content: space-between; align-items: center; padding-left: 4px; height: 22px; }
  .cv.start { align-items: flex-start; }
  .cv input {
    appearance: none; width: 40px; height: 22px; border: 1px solid #000; border-radius: 2px;
    background: linear-gradient(90deg, #bcbcbc 0 25px, #8e8e8e 25px 29px, #bcbcbc 29px);
  }
  .cv input::-webkit-slider-thumb {
    appearance: none; width: 12px; height: 20px; background: repeating-linear-gradient(90deg, #3c3c3c 0 3px, #191919 3px 4px);
  }
  .ico { display: flex; justify-content: space-between; width: 28px; margin: 5px 5px 9px auto; font-size: 9px; line-height: 12px; font-weight: 700; }
  .legend > .sh { margin: 3px 5px 0 auto; }

  .cursor { position: absolute; left: 1921px; top: 639px; width: 13px; height: 19px; z-index: 2; }
</style>
